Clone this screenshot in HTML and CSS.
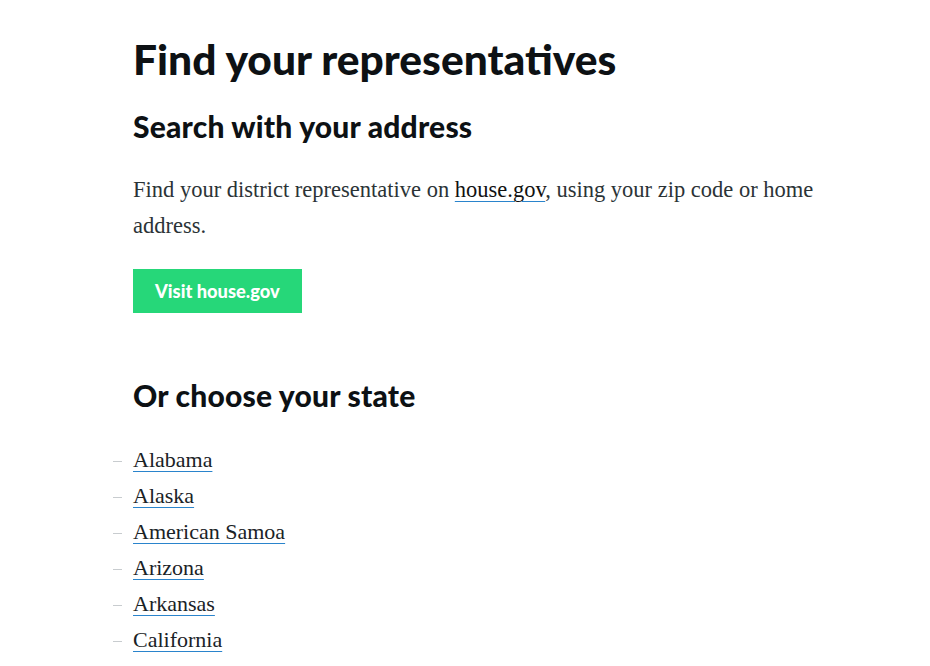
FILE: index.html
```html
<!DOCTYPE html>
<html lang="en">
<head>
<meta charset="utf-8">
<title>Find your representatives</title>
<link rel="stylesheet" href="styles.css">
</head>
<body>
<main class="page">
  <h1 class="title">Find your representatives</h1>
  <h2 class="subtitle">Search with your address</h2>
  <p class="lead">Find your district representative on <a class="link" href="#">house.gov</a>, using your zip code or home address.</p>
  <a class="button" href="#">Visit house.gov</a>
  <h2 class="subtitle subtitle-states">Or choose your state</h2>
  <ul class="states">
    <li class="state"><a class="link" href="#">Alabama</a></li>
    <li class="state"><a class="link" href="#">Alaska</a></li>
    <li class="state"><a class="link" href="#">American Samoa</a></li>
    <li class="state"><a class="link" href="#">Arizona</a></li>
    <li class="state"><a class="link" href="#">Arkansas</a></li>
    <li class="state"><a class="link" href="#">California</a></li>
  </ul>
</main>
</body>
</html>
```

FILE: styles.css
```css
html, body {
  margin: 0;
  padding: 0;
  background: #ffffff;
}

.page {
  width: 682px;
  margin: 0 auto;
  padding: 37px 0 0 18px;
  color: #0d1114;
}

.title {
  font-family: "Lato", "Inter", sans-serif;
  font-weight: 900;
  font-size: 42.5px;
  line-height: 44px;
  margin: 0 0 28px;
}

.subtitle {
  font-family: "Lato", "Inter", sans-serif;
  font-weight: 900;
  font-size: 30px;
  line-height: 34px;
  letter-spacing: 0.2px;
  margin: 0 0 29px;
}

.lead {
  font-family: "Liberation Serif", serif;
  font-size: 22.5px;
  line-height: 36px;
  color: #2b3336;
  margin: 0 0 25px;
}

.link {
  color: #1a2226;
  text-decoration: underline;
  text-decoration-color: #2a84cc;
  text-underline-offset: 4px;
  text-decoration-thickness: 1px;
}

.lead .link {
  color: #111;
}

.button {
  display: inline-block;
  background: #26d779;
  color: #ffffff;
  font-family: "Lato", "Inter", sans-serif;
  font-weight: 900;
  font-size: 18.3px;
  line-height: 44px;
  padding: 0 22px;
  text-decoration: none;
}

.subtitle-states {
  margin-top: 65px;
  margin-bottom: 30px;
}

.states {
  list-style: none;
  margin: 0;
  padding: 0;
  font-family: "Liberation Serif", serif;
  font-size: 22px;
  line-height: 36px;
}

.state {
  position: relative;
}

.state::before {
  content: "";
  position: absolute;
  left: -20px;
  top: 19px;
  width: 9px;
  height: 1px;
  background: #c8cccf;
}
```
